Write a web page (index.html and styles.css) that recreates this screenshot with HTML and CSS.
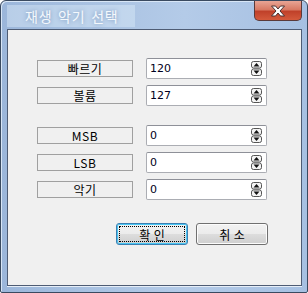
FILE: index.html
```html
<!DOCTYPE html>
<html lang="ko">
<head>
    <meta charset="UTF-8">
    <title>재생 악기 선택</title>
    <link rel="stylesheet" href="styles.css">
</head>
<body>
    <div class="window">
        <div class="titlebar">
            <div class="title-glow"><span class="title">재생 악기 선택</span></div>
            <div class="close-btn">
                <svg width="16" height="12" viewBox="0 0 16 12">
                    <path d="M1.5 1 H5.5 L8 4 L10.5 1 H14.5 L10 6 L14.5 11 H10.5 L8 8 L5.5 11 H1.5 L6 6 Z" fill="#fff" stroke="#4a3030" stroke-width="1"/>
                </svg>
            </div>
        </div>
        <div class="client">
            <div class="group">
                <div class="row">
                    <div class="label">빠르기</div>
                    <div class="field"><span>120</span><i class="spin"></i></div>
                </div>
                <div class="row">
                    <div class="label">볼륨</div>
                    <div class="field"><span>127</span><i class="spin"></i></div>
                </div>
            </div>
            <div class="group">
                <div class="row">
                    <div class="label">MSB</div>
                    <div class="field"><span>0</span><i class="spin"></i></div>
                </div>
                <div class="row">
                    <div class="label">LSB</div>
                    <div class="field"><span>0</span><i class="spin"></i></div>
                </div>
                <div class="row">
                    <div class="label">악기</div>
                    <div class="field"><span>0</span><i class="spin"></i></div>
                </div>
            </div>
            <div class="buttons">
                <div class="btn default"><span class="focus">확 인</span></div>
                <div class="btn">취 소</div>
            </div>
        </div>
    </div>
    <script>
    // spinner glyphs are the same for every field
    var spins = document.querySelectorAll(".spin");
    for (var i = 0; i < spins.length; i++) {
        spins[i].innerHTML = '<svg width="11" height="15" viewBox="0 0 11 15">' +
            '<rect x="0.5" y="0.5" width="10" height="6.5" rx="2" fill="#f4f4f4" stroke="#555"/>' +
            '<rect x="0.5" y="8" width="10" height="6.5" rx="2" fill="#f4f4f4" stroke="#555"/>' +
            '<path d="M2.5 5.5 L5.5 2 L8.5 5.5 Z" fill="#111"/>' +
            '<path d="M2.5 9.5 L5.5 13 L8.5 9.5 Z" fill="#111"/>' +
            '</svg>';
    }
    </script>
</body>
</html>
```

FILE: styles.css
```css
body{
    margin: 0;
    padding: 0;
    background: #fff;
}
.window{
    width: 306px;
    height: 291px;
    border: 1px solid #3a4a60;
    border-radius: 6px 6px 2px 2px;
    background: linear-gradient(90deg, #9bb6da 0%, #a9c2e2 30%, #b4cbe8 60%, #a6c0e2 100%);
    display: flex;
    flex-direction: column;
    overflow: hidden;
    box-shadow: inset 1px 1px 0 #d8e6f6;
}
.titlebar{
    height: 28px;
    display: flex;
    justify-content: space-between;
    align-items: flex-start;
}
.title-glow{
    margin: 4px 0 0 6px;
    width: 128px;
    height: 22px;
    background: rgba(220, 234, 248, 0.45);
    display: flex;
    align-items: center;
}
.title{
    font-family: "Noto Sans CJK KR", sans-serif;
    font-size: 14px;
    color: #f4f8fc;
    margin-left: 18px;
    letter-spacing: 0.8px;
    word-spacing: 1px;
    text-shadow: 0 0 4px #6f8fb8;
}
.close-btn{
    width: 46px;
    height: 19px;
    margin-right: 5px;
    border: 1px solid #5a3a3a;
    border-top: none;
    border-radius: 0 0 5px 5px;
    background: linear-gradient(#e8a595 0%, #d87a64 45%, #c0412a 55%, #d45a3c 100%);
    display: flex;
    justify-content: center;
    align-items: center;
}
.client{
    margin: 0 5px 6px 6px;
    flex: 1;
    border: 1px solid #4e5c74;
    background: #f0f0f0;
    display: flex;
    flex-direction: column;
    padding-top: 28px;
    box-shadow: 0 1px 0 #e6eef8;
}
.group{
    display: flex;
    flex-direction: column;
    gap: 7px;
    margin-bottom: 20px;
}
.row{
    display: flex;
    align-items: center;
    height: 20px;
    padding-left: 29px;
}
.label{
    width: 94px;
    height: 15px;
    border: 1px solid #a0a0a0;
    font-family: "Noto Sans CJK KR", sans-serif;
    font-size: 12px;
    line-height: 15px;
    text-align: center;
    color: #000;
    letter-spacing: 0.5px;
}
.field{
    margin-left: 13px;
    height: 19px;
    border: 1px solid #abadb3;
    border-top-color: #8e9098;
    border-radius: 2px;
    background: #fff;
    display: flex;
    align-items: center;
    justify-content: space-between;
    padding: 0 4px 0 3px;
    box-sizing: content-box;
    width: 112px;
}
.field span{
    font-family: "DejaVu Sans", sans-serif;
    font-size: 11px;
    color: #000020;
}
.spin{
    display: flex;
    width: 11px;
    height: 15px;
}
.buttons{
    display: flex;
    justify-content: flex-end;
    gap: 8px;
    padding-right: 33px;
    margin-top: 4px;
}
.btn{
    width: 70px;
    height: 20px;
    border: 1px solid #707070;
    border-radius: 3px;
    background: linear-gradient(#f2f2f2 0%, #ebebeb 50%, #dddddd 50%, #cfcfcf 100%);
    font-family: "Noto Sans CJK KR", sans-serif;
    font-size: 12px;
    display: flex;
    justify-content: center;
    align-items: center;
    box-shadow: inset 0 0 0 1px #fcfcfc;
}
.btn.default{
    border-color: #3c7fb1;
    box-shadow: inset 0 0 0 1px #48c6f4;
}
.focus{
    width: 64px;
    height: 14px;
    border: 1px dotted #000;
    display: flex;
    justify-content: center;
    align-items: center;
}
```
